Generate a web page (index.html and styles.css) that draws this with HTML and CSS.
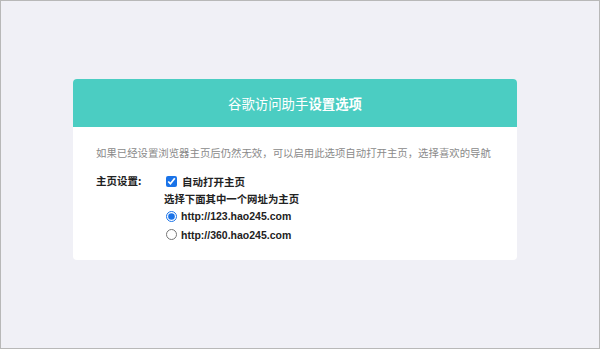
FILE: index.html
```html
<!DOCTYPE html>
<html>
<head>
<meta charset="utf-8">
<link rel="stylesheet" href="styles.css">
</head>
<body>
<div class="frame">
  <div class="card">
    <div class="card-head">谷歌访问助手<b>设置选项</b></div>
    <div class="card-body">
      <p class="desc">如果已经设置浏览器主页后仍然无效，可以启用此选项自动打开主页，选择喜欢的导航</p>
      <div class="row">
        <div class="label">主页设置:</div>
        <div class="opts">
          <label class="opt"><input type="checkbox" checked> 自动打开主页</label>
          <div class="sub">选择下面其中一个网址为主页</div>
          <label class="opt radio"><input type="radio" name="hp" checked> http://123.hao245.com</label>
          <label class="opt radio"><input type="radio" name="hp"> http://360.hao245.com</label>
        </div>
      </div>
    </div>
  </div>
</div>
</body>
</html>
```
FILE: styles.css
```css
html, body { margin: 0; padding: 0; }
body {
  font-family: "Liberation Sans", Arial, "Noto Sans CJK SC", sans-serif;
  color: #222;
}
.frame {
  box-sizing: border-box;
  width: 600px;
  height: 349px;
  border: 1px solid #b8b8b8;
  background: #f0f0f6;
  padding-top: 78px;
}
.card {
  width: 444px;
  margin-left: 72px;
  background: #fff;
  border-radius: 4px;
  overflow: hidden;
}
.card-head {
  height: 48px;
  background: #4bcdc2;
  color: #fff;
  font-size: 13.4px;
  display: flex;
  align-items: center;
  justify-content: center;
  font-family: "Noto Sans CJK SC", sans-serif;
}
.card-head b { font-weight: 700; }
.card-body {
  padding: 19px 23px 16px;
}
.desc {
  margin: 0 0 12px;
  font-size: 10.4px;
  color: #8a8a8a;
  font-family: "Noto Sans CJK SC", sans-serif;
  line-height: 14px;
}
.row { display: flex; }
.label {
  width: 68px;
  font-size: 10.5px;
  font-weight: 700;
  font-family: "Noto Sans CJK SC", sans-serif;
  line-height: 18px;
}
.opts { display: flex; flex-direction: column; }
.opt {
  display: flex;
  align-items: center;
  font-size: 10.5px;
  font-weight: 700;
  height: 18px;
  font-family: "Liberation Sans", "Noto Sans CJK SC", sans-serif;
}
.opt input {
  margin: 0 5px 0 2px;
  width: 11px;
  height: 11px;
  accent-color: #1a73e8;
}
.sub {
  font-size: 10.4px;
  font-weight: 700;
  line-height: 17px;
  font-family: "Noto Sans CJK SC", sans-serif;
}
.radio { height: 18.5px; font-size: 10.5px; }
.radio input { margin-left: 2px; margin-right: 4px; }
```
